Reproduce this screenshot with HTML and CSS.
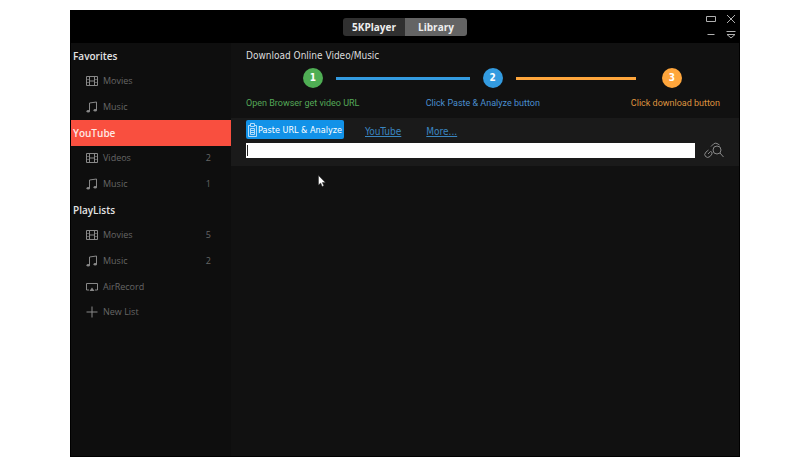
FILE: index.html
```html
<!DOCTYPE html>
<html lang="en">
<head>
<meta charset="utf-8">
<meta name="viewport" content="width=device-width, initial-scale=1">
<title>5KPlayer Library</title>
<link rel="stylesheet" href="styles.css">
</head>
<body>
<svg class="defs" aria-hidden="true">
  <symbol id="film" viewBox="0 0 12 12"><path d="M.5 1.500h11v9H.5zM3.500 1.500v9M8.500 1.500v9M3.500 6h5"/><path stroke-opacity=".6" d="M.5 4.500h3M.5 7.500h3M8.500 4.500h3M8.500 7.500h3"/></symbol>
  <symbol id="note" viewBox="0 0 12 12"><path d="M3.500 10V2l7-1v8"/><ellipse class="solid" cx="2.200" cy="10.200" rx="1.700" ry="1.300"/><ellipse class="solid" cx="9.200" cy="9.200" rx="1.700" ry="1.300"/></symbol>
  <symbol id="airplay" viewBox="0 0 12 12"><path d="M3 9H.5V2.500h11V9H9"/><path class="solid" d="M6 6.500 8.500 10h-5z"/></symbol>
  <symbol id="plus" viewBox="0 0 12 12"><path d="M6 .5v11M.5 6h11"/></symbol>
</svg>
<div class="window">
  <header class="titlebar">
    <nav class="tabs">
      <button class="tab" type="button">5KPlayer</button>
      <button class="tab tab-active" type="button">Library</button>
    </nav>
    <div class="controls">
      <button type="button" aria-label="Maximize"><svg viewBox="0 0 10 10"><path d="M.5 2.500h9v5h-9z"/></svg></button>
      <button type="button" aria-label="Close"><svg viewBox="0 0 10 10"><path d="m1 1 8 8M9 1 1 9"/></svg></button>
      <button type="button" aria-label="Minimize"><svg viewBox="0 0 10 10"><path d="M1.500 4.500h7"/></svg></button>
      <button type="button" aria-label="Menu"><svg viewBox="0 0 10 10"><path d="M.5 1.500h9M1 4.500h8L5 8z"/></svg></button>
    </div>
  </header>
  <div class="body">
    <aside class="sidebar">
      <h2>Favorites</h2>
      <a class="item" href="#"><svg><use href="#film"/></svg><span>Movies</span></a>
      <a class="item" href="#"><svg><use href="#note"/></svg><span>Music</span></a>
      <h2 class="selected">YouTube</h2>
      <a class="item" href="#"><svg><use href="#film"/></svg><span>Videos</span><span class="count">2</span></a>
      <a class="item" href="#"><svg><use href="#note"/></svg><span>Music</span><span class="count">1</span></a>
      <h2>PlayLists</h2>
      <a class="item" href="#"><svg><use href="#film"/></svg><span>Movies</span><span class="count">5</span></a>
      <a class="item" href="#"><svg><use href="#note"/></svg><span>Music</span><span class="count">2</span></a>
      <a class="item" href="#"><svg><use href="#airplay"/></svg><span>AirRecord</span></a>
      <a class="item" href="#"><svg><use href="#plus"/></svg><span>New List</span></a>
    </aside>
    <main class="main">
      <h1>Download Online Video/Music</h1>
      <div class="track">
        <span class="dot green">1</span><span class="line blue"></span>
        <span class="dot blue">2</span><span class="line orange"></span>
        <span class="dot orange">3</span>
      </div>
      <div class="labels">
        <span class="green-text">Open Browser get video URL</span>
        <span class="blue-text">Click Paste &amp; Analyze button</span>
        <span class="orange-text">Click download button</span>
      </div>
      <form class="panel">
        <div class="actions">
          <button class="paste" type="button"><svg viewBox="0 0 9 14"><path d="M2.500 2.500h-2v11h8v-11h-2M2.500.5h4v3h-4zM2.500 5.500h4v6h-4zM2.500 7.500h4M2.500 9.500h4"/></svg>Paste URL &amp; Analyze</button>
          <a href="#">YouTube</a>
          <a href="#">More...</a>
        </div>
        <div class="search">
          <input type="text" aria-label="Video URL">
          <button class="find" type="button" aria-label="Find video"><svg viewBox="0 0 20 16"><circle cx="13" cy="8" r="4"/><path d="m16 11 3.500 4M7 4.500 9.500 2q1.500-1.500 3.500-.5l2.500 1.500M4.500 8 2 10q-2.500 2.500-.5 4.500t4.500 0l2-2.500Q8.500 9.500 6.500 9.500L4 12"/></svg></button>
        </div>
      </form>
    </main>
  </div>
  <svg class="pointer" viewBox="0 0 8 12" aria-hidden="true"><path d="M.5.5v9.500l2.200-2 1.500 3.500 1.600-.7L4.300 7.500h3z"/></svg>
</div>
</body>
</html>
```

FILE: styles.css
```css
* { box-sizing: border-box; }
body {
  margin: 0;
  padding: 10px 60px 6px 70px;
  min-height: 100vh;
  display: flex;
  background: #fff;
  font-family: "DejaVu Sans Condensed", "DejaVu Sans", sans-serif;
  font-size: 10px;
  line-height: 14px;
}
.defs { display: none; }
svg { display: block; flex: none; fill: none; stroke: currentColor; stroke-width: 1; }
.solid { fill: currentColor; stroke: none; }
button { margin: 0; padding: 0; border: 0; background: none; font: inherit; color: inherit; }
h1, h2 { margin: 0; font-weight: 400; }
.window {
  position: relative;
  flex: 1;
  display: flex;
  flex-direction: column;
  background: #0e0e0e;
  border: 1px solid #000;
}
.titlebar {
  height: 32px;
  display: grid;
  grid-template-columns: 1fr auto 1fr;
  align-items: center;
  background: #000;
}
.tabs { grid-column: 2; display: flex; border-radius: 3px; overflow: hidden; }
.tab {
  width: 62px;
  height: 18px;
  background: #303030;
  color: #eee;
  font-family: "Open Sans", "Noto Sans", sans-serif;
  font-size: 10px;
  font-weight: 700;
}
.tab-active { background: #646464; }
.controls {
  justify-self: end;
  display: grid;
  grid-template-columns: 10px 10px;
  gap: 6px 10px;
  margin-right: 3px;
  color: #b0b0b0;
}
.controls svg { width: 10px; height: 10px; }
.body { flex: 1; display: flex; }
.sidebar {
  width: 160px;
  height: 282px;
  display: grid;
  grid-auto-rows: 1fr;
  font-family: "Open Sans", "Noto Sans", sans-serif;
}
h2 { display: flex; align-items: center; padding-left: 2px; font-size: 10px; font-weight: 600; color: #e4e4e4; }
.selected { background: #f94f3f; color: #ffe8e4; }
.item {
  display: flex;
  align-items: center;
  padding: 0 20px 0 15px;
  gap: 5px;
  color: #666;
  font-size: 9px;
  text-decoration: none;
}
.item svg { width: 12px; height: 12px; color: #888; }
.count { margin-left: auto; }
.main { flex: 1; min-width: 0; background: #111; }
h1 { padding: 6px 15px 0; color: #ddd; font-size: 10px; }
.track { display: flex; align-items: center; gap: 13px; padding: 5px 57px 0 72px; }
.dot {
  width: 20px;
  height: 20px;
  border-radius: 50%;
  display: grid;
  place-items: center;
  color: #fff;
  font-weight: 700;
}
.line { flex: 10 1 0; height: 3px; }
.line.orange { flex-grow: 9; margin-right: 13px; }
.green { background: #4fae54; }
.blue { background: #339be0; }
.orange { background: #ffa63c; }
.labels {
  display: grid;
  grid-template-columns: 183fr 209fr auto;
  padding: 8px 19px 8px 15px;
  font-family: Roboto, sans-serif;
  font-size: 9px;
  white-space: nowrap;
}
.green-text { color: #54a858; }
.blue-text { color: #4a8fd0; }
.orange-text { color: #df9440; }
.panel { background: #1a1a1a; padding: 2px 15px 8px; }
.actions { display: flex; height: 22px; }
.paste {
  width: 98px;
  height: 19px;
  display: flex;
  align-items: center;
  justify-content: center;
  gap: 1px;
  border-radius: 2px;
  background: #1292e8;
  color: #fff;
  font-size: 9px;
  white-space: nowrap;
}
.paste svg { width: 9px; height: 14px; color: #b4dcfa; }
.actions a { padding-top: 5px; margin-left: 21px; color: #3a86c0; }
.actions a + a { margin-left: 25px; }
.search { display: flex; align-items: center; gap: 9px; }
.search input {
  flex: 1;
  min-width: 0;
  height: 15px;
  padding: 0 3px;
  border: 0;
  border-radius: 0;
  outline: 0;
  background: linear-gradient(#222, #222) 1px 2px / 1px 11px no-repeat #fff;
  color: #000;
  font: inherit;
}
.find { color: #888; }
.find svg { width: 20px; height: 16px; }
.pointer {
  position: absolute;
  left: 247px;
  top: 164px;
  width: 8px;
  height: 12px;
  fill: #fff;
  stroke: #333;
  stroke-width: .5;
}
```
